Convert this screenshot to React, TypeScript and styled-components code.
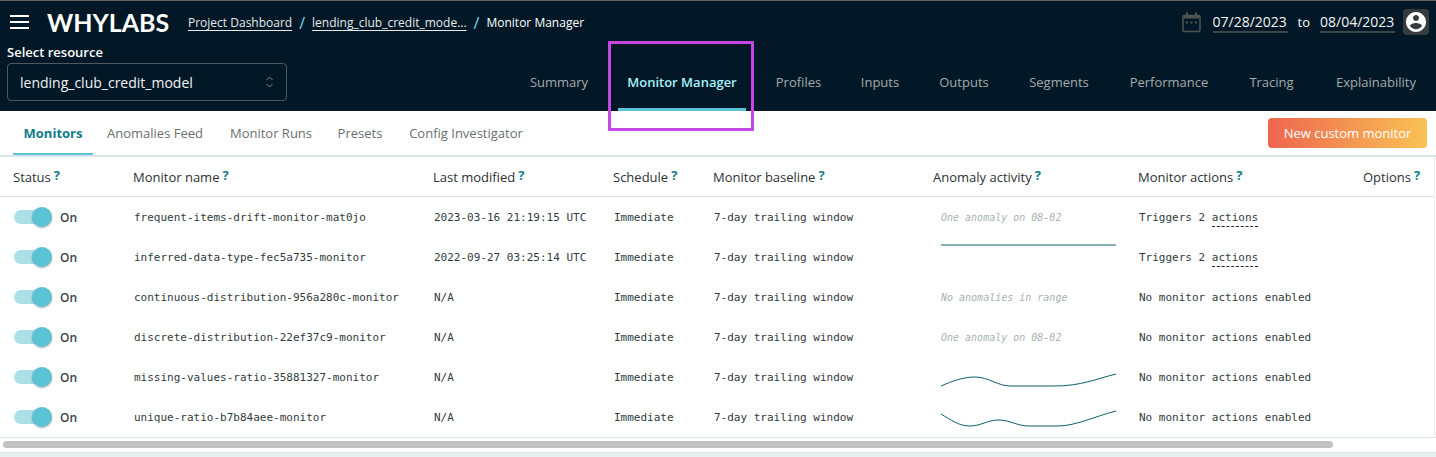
import React, { useState } from 'react';
import styled, { createGlobalStyle, css } from 'styled-components';

const sans = '"Open Sans", "Noto Sans", sans-serif';
const mono = '"DejaVu Sans Mono", monospace';
const navy = '#021826';
const teal = '#0e7c8a';
const aqua = '#5bc3d6';
const line = '#dbe5e7';

const GlobalStyle = createGlobalStyle`
  * { box-sizing: border-box; }
  body { margin: 0; background: #e8f0f2; font-family: ${sans}; color: #313b3d; overflow-x: hidden; }
  button, input, select { font-family: inherit; }
`;

const Header = styled.header`
  background: ${navy};
  border-top: 1px solid #5f625e;
  color: #fff;
`;

const TopBar = styled.div`
  display: flex;
  align-items: center;
  height: 42px;
  padding: 0 7px 0 10px;
`;

const MenuButton = styled.button`
  width: 19px;
  height: 16px;
  padding: 0;
  border: 0;
  background: none;
  color: #fff;
  svg { display: block; }
`;

const Logo = styled.span`
  width: 121px;
  margin: 0 20px 0 18px;
  font: 700 25px/32px Lato, sans-serif;
  white-space: nowrap;
`;

const Breadcrumbs = styled.nav`
  display: flex;
  flex: 1;
  gap: 7px;
  padding-top: 2px;
  font-size: 12px;
  line-height: 18px;
  white-space: nowrap;
  a { color: #e6eaec; text-underline-offset: 3px; }
`;

const Slash = styled.span`
  color: #6fdcf0;
  font-size: 16px;
`;

const DateRange = styled.div`
  display: flex;
  align-items: center;
  gap: 10px;
  font-size: 13px;
  svg { margin-right: 2px; }
`;

const DateInput = styled.input`
  width: 75px;
  height: 22px;
  padding: 0;
  border: 0;
  border-bottom: 2px solid #3c4749;
  background: none;
  color: #f2f4f5;
  font-size: 14px;
`;

const Avatar = styled.button`
  display: grid;
  place-items: center;
  width: 26px;
  height: 26px;
  margin-left: 8px;
  padding: 0;
  border: 0;
  border-radius: 4px;
  background: #343c3f;
`;

const ResourceBar = styled.div`
  display: flex;
  justify-content: space-between;
  height: 68px;
  padding: 0 8px 0 7px;
`;

const Resource = styled.div`
  label { display: block; font-size: 13px; font-weight: 600; line-height: 18px; }
`;

const SelectBox = styled.div`
  display: grid;
  align-items: center;
  width: 280px;
  margin-top: 2px;
  select, svg { grid-area: 1 / 1; }
  select {
    height: 38px;
    padding: 0 12px;
    appearance: none;
    border: 1px solid #4e5a5f;
    border-radius: 4px;
    background: transparent;
    color: #f2f4f5;
    font-size: 14px;
  }
  svg { justify-self: end; margin-right: 13px; pointer-events: none; }
`;

const MainTabs = styled.nav`
  display: flex;
  gap: 20px;
  padding-top: 12px;
`;

const MainTab = styled.a<{ $width: number; $active?: boolean }>`
  position: relative;
  width: ${(p) => p.$width}px;
  padding-top: 17px;
  border-bottom: 3px solid transparent;
  color: #a4abae;
  font-size: 13px;
  line-height: 20px;
  text-align: center;
  text-decoration: none;
  white-space: nowrap;
  ${(p) => p.$active && css`
    border-color: ${aqua};
    color: #a4f0fb;
    font-weight: 600;
  `}
`;

const Highlight = styled.span`
  position: absolute;
  inset: -14px -8px -23px -10px;
  border: 3px solid #c548e6;
  border-radius: 1px;
  pointer-events: none;
`;

const SubBar = styled.div`
  display: flex;
  justify-content: space-between;
  height: 46px;
  padding: 0 9px 0 13px;
  border-bottom: 2px solid #d8e6e7;
  background: #fff;
`;

const SubTabs = styled.nav`
  display: flex;
`;

const SubTab = styled.a<{ $width: number; $active?: boolean }>`
  width: ${(p) => p.$width}px;
  padding-top: 12px;
  border-bottom: 2px solid ${(p) => (p.$active ? aqua : 'transparent')};
  color: ${(p) => (p.$active ? teal : '#6a6f70')};
  font-size: 13px;
  font-weight: ${(p) => (p.$active ? 700 : 400)};
  line-height: 20px;
  text-align: center;
  text-decoration: none;
  white-space: nowrap;
`;

const NewMonitorButton = styled.button`
  width: 159px;
  height: 30px;
  margin-top: 7px;
  padding: 0;
  border: 0;
  border-radius: 4px;
  background: linear-gradient(90deg, #ee6650, #f9c254);
  color: #fff;
  font-size: 13px;
`;

const TableArea = styled.main`
  padding-right: 1px;
  border-bottom: 1px solid ${line};
  background: #fff;
`;

const Table = styled.table`
  width: 100%;
  table-layout: fixed;
  border-collapse: separate;
  border-spacing: 0;
  border-right: 1px solid #e9eff0;
  th, td { height: 40px; padding: 0 0 0 14px; text-align: left; white-space: nowrap; }
  th {
    border-bottom: 1px solid ${line};
    padding-left: 13px;
    color: #2b3133;
    font-size: 13px;
    font-weight: 400;
  }
  td { font-family: ${mono}; font-size: 11px; }
`;

const Col = styled.col<{ $width?: number }>`
  width: ${(p) => (p.$width ? `${p.$width}px` : 'auto')};
`;

const Heading = styled.span`
  display: flex;
  gap: 3px;
  line-height: 18px;
`;

const Help = styled.span`
  color: ${teal};
  font-size: 13px;
  font-weight: 700;
  line-height: 14px;
`;

const Toggle = styled.label`
  display: flex;
  align-items: center;
  gap: 8px;
  color: #3c4547;
  font-family: ${sans};
  font-size: 12px;
  font-weight: 600;
`;

const Switch = styled.input`
  display: grid;
  align-items: center;
  width: 38px;
  height: 20px;
  margin: 0;
  appearance: none;
  &::before, &::after { content: ''; grid-area: 1 / 1; }
  &::before { width: 34px; height: 14px; border-radius: 7px; background: #c9cfd0; }
  &::after {
    width: 20px;
    height: 20px;
    border-radius: 50%;
    background: #f4f6f6;
    box-shadow: 0 1px 2px rgba(0, 0, 0, 0.3);
  }
  &:checked::before { background: #addfe9; }
  &:checked::after { justify-self: end; background: ${aqua}; }
`;

const Note = styled.em`
  padding-left: 7px;
  color: #a9b1b3;
  font-size: 10px;
`;

const Spark = styled.svg`
  display: block;
  margin-left: 7px;
  fill: none;
  stroke: #0f5f6d;
`;

const ActionsLink = styled.a`
  padding-bottom: 2px;
  border-bottom: 1px dashed #1f2628;
  color: inherit;
  text-decoration: none;
`;

const ScrollTrack = styled.div`
  height: 15px;
  padding: 3px;
  border-bottom: 1px solid ${line};
  background: #fff;
`;

const ScrollThumb = styled.div`
  width: 93%;
  height: 7px;
  border-radius: 4px;
  background: #c1c1c1;
`;

const mainTabs = [
  { label: 'Summary', width: 78 },
  { label: 'Monitor Manager', width: 128 },
  { label: 'Profiles', width: 65 },
  { label: 'Inputs', width: 58 },
  { label: 'Outputs', width: 70 },
  { label: 'Segments', width: 80 },
  { label: 'Performance', width: 100 },
  { label: 'Tracing', width: 65 },
  { label: 'Explainability', width: 104 },
];

const subTabs = [
  { label: 'Monitors', width: 80 },
  { label: 'Anomalies Feed', width: 124 },
  { label: 'Monitor Runs', width: 108 },
  { label: 'Presets', width: 70 },
  { label: 'Config Investigator', width: 142 },
];

const columns: { label: string; width?: number }[] = [
  { label: 'Status', width: 120 },
  { label: 'Monitor name', width: 300 },
  { label: 'Last modified', width: 180 },
  { label: 'Schedule', width: 100 },
  { label: 'Monitor baseline', width: 220 },
  { label: 'Anomaly activity', width: 205 },
  { label: 'Monitor actions', width: 225 },
  { label: 'Options' },
];

interface Monitor {
  name: string;
  modified: string;
  note?: string;
  spark?: string;
  actions: number;
}

const monitors: Monitor[] = [
  { name: 'frequent-items-drift-monitor-mat0jo', modified: '2023-03-16 21:19:15 UTC', note: 'One anomaly on 08-02', actions: 2 },
  { name: 'inferred-data-type-fec5a735-monitor', modified: '2022-09-27 03:25:14 UTC', spark: 'M0 8H175', actions: 2 },
  { name: 'continuous-distribution-956a280c-monitor', modified: 'N/A', note: 'No anomalies in range', actions: 0 },
  { name: 'discrete-distribution-22ef37c9-monitor', modified: 'N/A', note: 'One anomaly on 08-02', actions: 0 },
  { name: 'missing-values-ratio-35881327-monitor', modified: 'N/A', spark: 'M0 29C12 24 22 20 34 20C48 20 56 29 70 29H113C140 29 155 22 175 17', actions: 0 },
  { name: 'unique-ratio-b7b84aee-monitor', modified: 'N/A', spark: 'M0 17C10 23 18 29 29 29C40 29 46 23 58 23C69 23 76 29 88 29H117C134 29 152 20 175 14', actions: 0 },
];

function MonitorRow({ monitor }: { monitor: Monitor }) {
  const [on, setOn] = useState(true);
  return (
    <tr>
      <td>
        <Toggle>
          <Switch type="checkbox" role="switch" checked={on} onChange={() => setOn(!on)} />
          {on ? 'On' : 'Off'}
        </Toggle>
      </td>
      <td>{monitor.name}</td>
      <td>{monitor.modified}</td>
      <td>Immediate</td>
      <td>7-day trailing window</td>
      <td>
        {monitor.note && <Note>{monitor.note}</Note>}
        {monitor.spark && (
          <Spark width="176" height="40" viewBox="0 0 176 40"><path d={monitor.spark} /></Spark>
        )}
      </td>
      <td>
        {monitor.actions > 0
          ? <>Triggers {monitor.actions} <ActionsLink href="#actions">actions</ActionsLink></>
          : 'No monitor actions enabled'}
      </td>
      <td />
    </tr>
  );
}

export default function App() {
  return (
    <>
      <GlobalStyle />
      <Header>
        <TopBar>
          <MenuButton aria-label="Menu">
            <svg width="19" height="16" viewBox="0 0 19 16" fill="currentColor">
              <path d="M0 1h19v2H0zM0 7h19v2H0zM0 13h19v2H0z" />
            </svg>
          </MenuButton>
          <Logo>WHYLABS</Logo>
          <Breadcrumbs aria-label="Breadcrumb">
            <a href="#dashboard">Project Dashboard</a>
            <Slash>/</Slash>
            <a href="#model">lending_club_credit_mode...</a>
            <Slash>/</Slash>
            <span>Monitor Manager</span>
          </Breadcrumbs>
          <DateRange>
            <svg width="19" height="21" viewBox="0 0 19 21" fill="none" stroke="#4d5657">
              <path strokeWidth="1.500" d="M2.500 3.500h14a1.500 1.500 0 0 1 1.500 1.500v13a1.500 1.500 0 0 1-1.500 1.500h-14A1.500 1.500 0 0 1 1 18V5a1.500 1.500 0 0 1 1.500-1.500z" />
              <path strokeWidth="3" d="M1.500 5h16" />
              <path strokeWidth="2" d="M5 .500v3M14 .500v3M4 10.500h2M8.500 10.500h2M13 10.500h2" />
            </svg>
            <DateInput aria-label="From" defaultValue="07/28/2023" />
            <span>to</span>
            <DateInput aria-label="To" defaultValue="08/04/2023" />
          </DateRange>
          <Avatar aria-label="Account">
            <svg width="24" height="24" viewBox="0 0 24 24" fill="#fff">
              <path d="M12 2C6.480 2 2 6.480 2 12s4.480 10 10 10 10-4.480 10-10S17.520 2 12 2zm0 3c1.660 0 3 1.340 3 3s-1.340 3-3 3-3-1.340-3-3 1.340-3 3-3zm0 14.200c-2.500 0-4.710-1.280-6-3.220.030-1.990 4-3.080 6-3.080 1.990 0 5.970 1.090 6 3.080-1.290 1.940-3.500 3.220-6 3.220z" />
            </svg>
          </Avatar>
        </TopBar>
        <ResourceBar>
          <Resource>
            <label htmlFor="resource">Select resource</label>
            <SelectBox>
              <select id="resource"><option>lending_club_credit_model</option></select>
              <svg width="9" height="12" viewBox="0 0 9 12" fill="none" stroke="#7f898d">
                <path d="M1.500 4l3-3 3 3M1.500 8l3 3 3-3" />
              </svg>
            </SelectBox>
          </Resource>
          <MainTabs>
            {mainTabs.map((tab) => {
              const active = tab.label === 'Monitor Manager';
              return (
                <MainTab key={tab.label} href="#tab" $width={tab.width} $active={active}>
                  {tab.label}
                  {active && <Highlight />}
                </MainTab>
              );
            })}
          </MainTabs>
        </ResourceBar>
      </Header>
      <SubBar>
        <SubTabs>
          {subTabs.map((tab) => (
            <SubTab key={tab.label} href="#view" $width={tab.width} $active={tab.label === 'Monitors'}>
              {tab.label}
            </SubTab>
          ))}
        </SubTabs>
        <NewMonitorButton>New custom monitor</NewMonitorButton>
      </SubBar>
      <TableArea>
        <Table>
          <colgroup>
            {columns.map((c) => <Col key={c.label} $width={c.width} />)}
          </colgroup>
          <thead>
            <tr>
              {columns.map((c) => (
                <th key={c.label}><Heading>{c.label}<Help>?</Help></Heading></th>
              ))}
            </tr>
          </thead>
          <tbody>
            {monitors.map((m) => <MonitorRow key={m.name} monitor={m} />)}
          </tbody>
        </Table>
      </TableArea>
      <ScrollTrack><ScrollThumb /></ScrollTrack>
    </>
  );
}
